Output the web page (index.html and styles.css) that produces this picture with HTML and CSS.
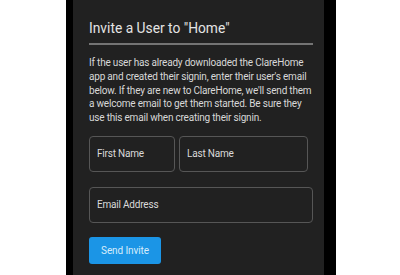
FILE: index.html
```html
<!DOCTYPE html>
<html>
<head>
<meta charset="utf-8">
<link rel="stylesheet" href="styles.css">
</head>
<body>
<div class="frame">
  <div class="panel">
    <h1 class="title">Invite a User to "Home"</h1>
    <div class="divider"></div>
    <p class="intro">If the user has already downloaded the ClareHome app and created their signin, enter their user's email below. If they are new to ClareHome, we'll send them a welcome email to get them started. Be sure they use this email when creating their signin.</p>
    <div class="name-row">
      <div class="field field-first">First Name</div>
      <div class="field field-last">Last Name</div>
    </div>
    <div class="field field-email">Email Address</div>
    <button class="send">Send Invite</button>
  </div>
</div>
</body>
</html>
```

FILE: styles.css
```css
html, body {
  margin: 0;
  padding: 0;
  background: #ffffff;
  height: 275px;
  overflow: hidden;
}
body {
  font-family: Roboto, "Liberation Sans", sans-serif;
}
.frame {
  margin-left: 66px;
  width: 270px;
  height: 275px;
  box-sizing: border-box;
  background: #000000;
  padding: 0 12px 0 7px;
}
.panel {
  height: 100%;
  background: #212121;
  box-sizing: border-box;
  padding: 20px 11px 0 16px;
  display: flex;
  flex-direction: column;
  align-items: flex-start;
}
.title {
  margin: 0;
  font-size: 13.8px;
  font-weight: 400;
  color: #e4e4e4;
  line-height: normal;
  white-space: nowrap;
}
.divider {
  align-self: stretch;
  height: 2px;
  background: #747474;
  margin-top: 7px;
}
.intro {
  margin: 11px 0 0 0;
  font-size: 10px;
  letter-spacing: -0.2px;
  line-height: 13.8px;
  color: #d8d8d8;
}
.name-row {
  display: flex;
  gap: 4px;
  margin-top: 11px;
  align-self: stretch;
}
.field {
  box-sizing: border-box;
  height: 36px;
  border: 1px solid #565656;
  border-radius: 4px;
  display: flex;
  align-items: center;
  padding-left: 7px;
  font-size: 10px;
  letter-spacing: -0.2px;
  color: #dadada;
}
.field-first {
  width: 86px;
}
.field-last {
  width: 129px;
}
.field-email {
  margin-top: 15px;
  align-self: stretch;
}
.send {
  margin-top: 14px;
  width: 72px;
  height: 27px;
  border: none;
  border-radius: 3px;
  background: #1b95e6;
  color: #d7ecfb;
  font-family: Roboto, "Liberation Sans", sans-serif;
  font-size: 10px;
  letter-spacing: -0.1px;
  padding: 0;
}
```
